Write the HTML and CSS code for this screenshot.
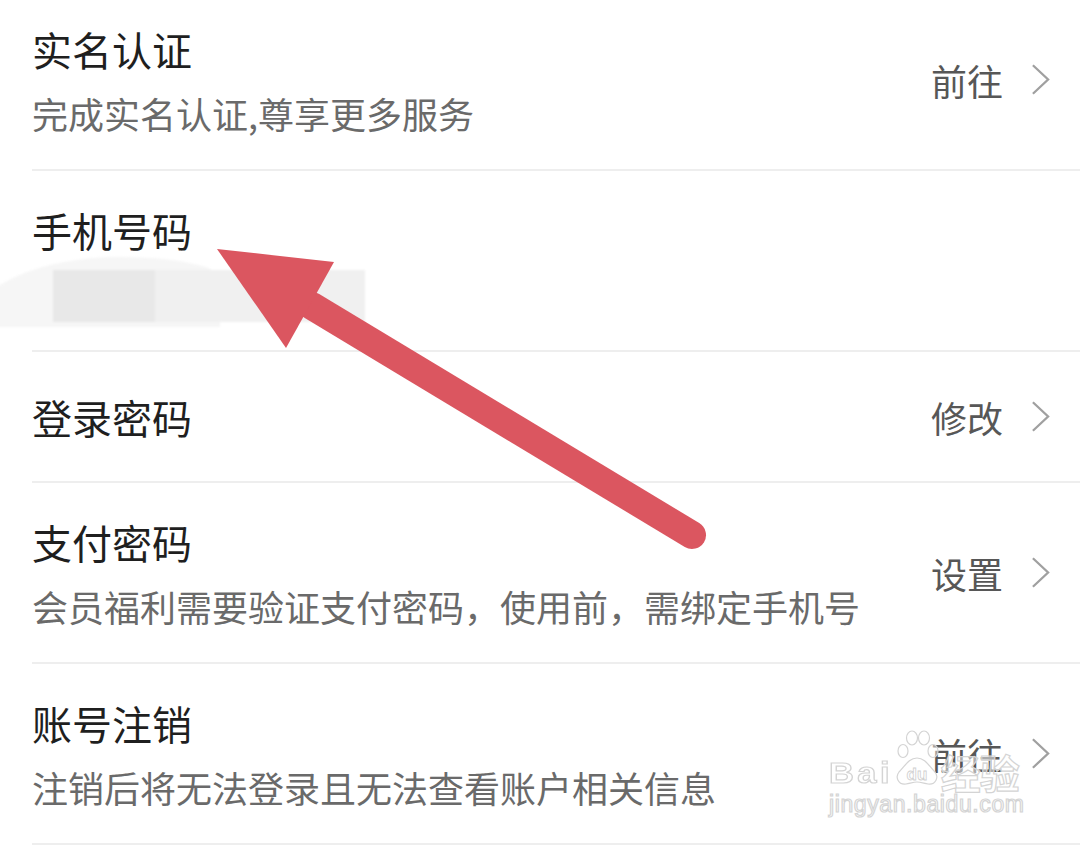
FILE: index.html
```html
<!DOCTYPE html>
<html lang="zh-CN">
<head>
  <meta charset="UTF-8" />
  <meta name="viewport" content="width=device-width, initial-scale=1" />
  <title>账号与安全</title>
  <link rel="stylesheet" href="styles.css">
</head>
<body>
  <div class="page">
    <ul class="list">
      <!-- 实名认证 -->
      <li class="item">
        <div class="item-main">
          <div class="item-title">实名认证</div>
          <div class="item-desc">完成实名认证,尊享更多服务</div>
        </div>
        <span class="item-action">前往</span>
        <svg class="chevron" viewBox="0 0 20 34"><polyline points="2,2 18,17 2,32" /></svg>
      </li>

      <!-- 手机号码 -->
      <li class="item">
        <div class="item-main">
          <div class="item-title">手机号码</div>
          <div class="item-desc masked">
            <span class="mask-a"></span><span class="mask-b"></span>
          </div>
        </div>
      </li>

      <!-- 登录密码 -->
      <li class="item">
        <div class="item-main">
          <div class="item-title">登录密码</div>
        </div>
        <span class="item-action">修改</span>
        <svg class="chevron" viewBox="0 0 20 34"><polyline points="2,2 18,17 2,32" /></svg>
      </li>

      <!-- 支付密码 -->
      <li class="item">
        <div class="item-main">
          <div class="item-title">支付密码</div>
          <div class="item-desc">会员福利需要验证支付密码，使用前，需绑定手机号</div>
        </div>
        <span class="item-action">设置</span>
        <svg class="chevron" viewBox="0 0 20 34"><polyline points="2,2 18,17 2,32" /></svg>
      </li>

      <!-- 账号注销 -->
      <li class="item">
        <div class="item-main">
          <div class="item-title">账号注销</div>
          <div class="item-desc">注销后将无法登录且无法查看账户相关信息</div>
        </div>
        <span class="item-action">前往</span>
        <svg class="chevron" viewBox="0 0 20 34"><polyline points="2,2 18,17 2,32" /></svg>
      </li>
    </ul>

    <!-- 标注箭头 -->
    <svg class="arrow" viewBox="0 0 1080 848">
      <line x1="692" y1="535" x2="312" y2="306" />
      <polygon points="217,249 334,262 286,348" />
    </svg>

    <!-- 水印 -->
    <div class="watermark">
      <div class="wm-top">
        <span class="wm-bai">Bai</span>
        <svg class="wm-paw" viewBox="0 0 44 56">
          <ellipse cx="8" cy="21" rx="5" ry="6.5" />
          <ellipse cx="17" cy="8" rx="5.5" ry="7" />
          <ellipse cx="29" cy="8" rx="5.5" ry="7" />
          <ellipse cx="38" cy="21" rx="5" ry="6.5" />
          <path d="M22 28 C14 28 10 36 4 42 C0 47 3 55 11 54 C16 53 19 52 22 52 C25 52 28 53 33 54 C41 55 44 47 40 42 C34 36 30 28 22 28 Z" />
          <text x="22" y="50" text-anchor="middle">du</text>
        </svg>
        <span class="wm-jy">经验</span>
      </div>
      <div class="wm-url">jingyan.baidu.com</div>
    </div>
  </div>
</body>
</html>
```

FILE: styles.css
```css
:root {
  --title-color: #1f1f1f;
  --desc-color: #6a6a6a;
  --action-color: #575757;
  --chevron-color: #a0a0a0;
  --divider: #eeeeee;
  --arrow-red: #db5660;
}

* {
  box-sizing: border-box;
  margin: 0;
  padding: 0;
}

body {
  font-family: "Noto Sans CJK SC", "Noto Sans", sans-serif;
  background: #fff;
  overflow: hidden;
}

.page {
  position: relative;
  width: 1080px;
  height: 848px;
  overflow: hidden;
}

.list {
  list-style: none;
  margin-top: -10px;
}

.item {
  display: flex;
  align-items: center;
  min-height: 131px;
  margin-left: 32px;
  padding: 31px 30px 31px 0;
  border-bottom: 2px solid var(--divider);
}

.item-main {
  flex: 1;
}

.item-title {
  font-size: 40px;
  line-height: 56px;
  color: var(--title-color);
}

.item-desc {
  margin-top: 11px;
  font-size: 36px;
  line-height: 50px;
  color: var(--desc-color);
  white-space: nowrap;
}

/* 打码的手机号 */
.masked {
  display: flex;
  height: 50px;
  margin-left: -32px;
  padding: 1px 0 0 53px;
  filter: blur(1.2px);
  position: relative;
}

.masked::before {
  content: "";
  position: absolute;
  left: -30px;
  top: -12px;
  width: 250px;
  height: 70px;
  border-radius: 60% 40% 0 0 / 100% 30% 0 0;
  background: #f6f6f6;
}

.mask-a {
  width: 102px;
  height: 52px;
  background: #e8e8e8;
  position: relative;
}

.mask-b {
  width: 210px;
  height: 52px;
  background: #f0f0f0;
  position: relative;
}

.item-action {
  font-size: 36px;
  line-height: 50px;
  color: var(--action-color);
  margin-right: 28px;
}

.chevron {
  width: 19px;
  height: 33px;
  fill: none;
  stroke: var(--chevron-color);
  stroke-width: 2.4;
}

.arrow {
  position: absolute;
  left: 0;
  top: 0;
  width: 1080px;
  height: 848px;
  pointer-events: none;
}

.arrow line {
  stroke: var(--arrow-red);
  stroke-width: 28;
  stroke-linecap: round;
}

.arrow polygon {
  fill: var(--arrow-red);
}

.watermark {
  position: absolute;
  left: 829px;
  top: 730px;
  font-family: "Liberation Sans", Arial, sans-serif;
  color: rgba(255, 255, 255, 0.5);
  -webkit-text-stroke: 1.2px #d4d4d4;
  pointer-events: none;
}

.wm-top {
  display: flex;
  align-items: flex-end;
  height: 56px;
}

.wm-bai {
  font-size: 30px;
  font-weight: 700;
  line-height: 26px;
  letter-spacing: 3px;
  display: inline-block;
  transform: scaleX(1.15);
  transform-origin: left bottom;
  margin-right: 10px;
}

.wm-paw {
  width: 44px;
  height: 56px;
  margin: 0 2px 0 0;
  fill: rgba(255, 255, 255, 0.45);
  stroke: #d4d4d4;
  stroke-width: 1.2;
}

.wm-paw text {
  font-size: 17px;
  font-weight: 700;
  fill: rgba(255, 255, 255, 0.5);
  stroke: #d0d0d0;
  stroke-width: 0.8;
}

.wm-jy {
  font-family: "Noto Sans CJK SC", sans-serif;
  font-size: 40px;
  font-weight: 700;
  line-height: 28px;
  letter-spacing: -1px;
}

.wm-url {
  font-size: 23px;
  line-height: 28px;
  margin-top: 4px;
  letter-spacing: 0.6px;
}
```
